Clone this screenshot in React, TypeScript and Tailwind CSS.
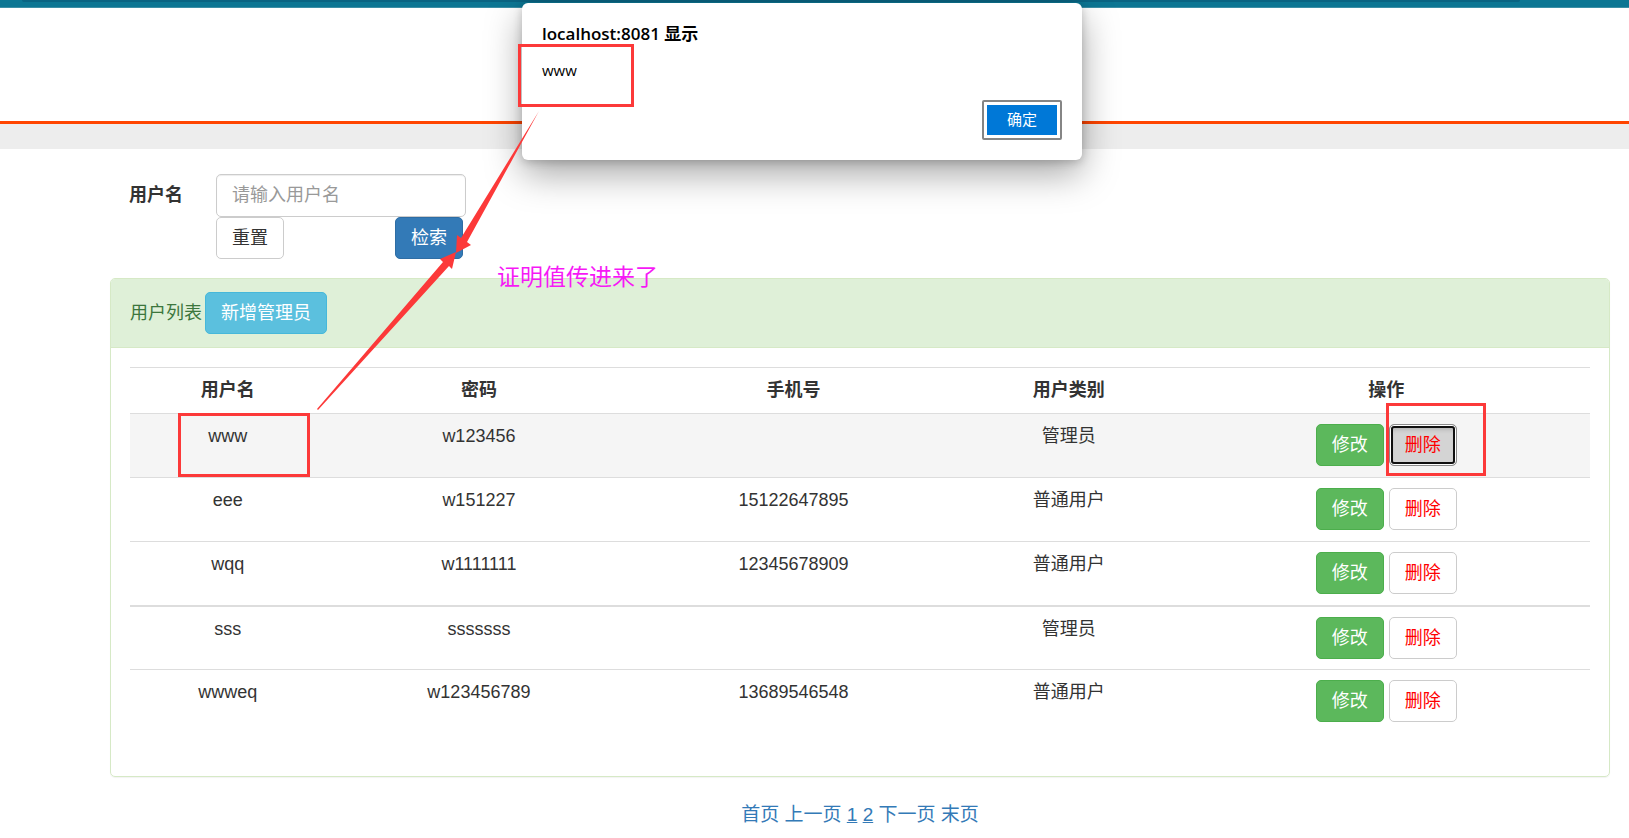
const users = [
    { name: "www", password: "w123456", phone: "", type: "管理员" },
    { name: "eee", password: "w151227", phone: "15122647895", type: "普通用户" },
    { name: "wqq", password: "w1111111", phone: "12345678909", type: "普通用户" },
    { name: "sss", password: "sssssss", phone: "", type: "管理员" },
    { name: "wwweq", password: "w123456789", phone: "13689546548", type: "普通用户" },
];

const btn = "h-[42px] rounded-[5px] border px-[15px] text-lg leading-6 whitespace-nowrap cursor-pointer";

function TopBar() {
    return (
        <header>
            <div className="h-2 bg-[#0c7693] border-b border-[#3c8fa5]">
                <div className="h-0.5 ml-[22px] mr-[109px] rounded-b-sm bg-[#0a6482]"></div>
            </div>
            <div className="h-[116px] border-b-3 border-[#ff4500]"></div>
            <div className="h-[25px] bg-[#ededed]"></div>
        </header>
    )
}

function SearchForm() {
    return (
        <form className="flex pl-[19px]" onSubmit={(e) => e.preventDefault()}>
            <label htmlFor="username" className="w-[87px] pt-[9px] font-bold">用户名</label>
            <div className="w-[250px]">
                <input
                    id="username"
                    type="text"
                    placeholder="请输入用户名"
                    className="block h-[43px] w-full rounded-[5px] border border-[#ccc] px-[15px] text-lg shadow-[inset_0_1px_1px_rgba(0,0,0,0.075)] placeholder:text-[#999] outline-none"
                />
                <div className="flex justify-between pr-[3px]">
                    <button type="reset" className={btn + " bg-white border-[#ccc]"}>重置</button>
                    <button type="submit" className={btn + " bg-[#337ab7] border-[#2e6da4] text-white"}>检索</button>
                </div>
            </div>
        </form>
    )
}

function UserTable() {
    return (
        <table className="w-full table-fixed mb-[23px] text-center">
            <thead>
                <tr className="h-[46px] border-t border-[#ddd]">
                    <th className="w-[13.4%]">用户名</th>
                    <th className="w-[21%]">密码</th>
                    <th className="w-[22.1%]">手机号</th>
                    <th className="w-[15.6%]">用户类别</th>
                    <th>操作</th>
                </tr>
            </thead>
            <tbody>
                {users.map((user, i) => (
                    <tr
                        key={user.name}
                        className={"h-16 align-top border-[#ddd] " + (i === 3 ? "border-t-2 " : "border-t ") + (i === 0 ? "bg-[#f5f5f5]" : "")}
                    >
                        <td className="pt-[10px]">{user.name}</td>
                        <td className="pt-[10px]">{user.password}</td>
                        <td className="pt-[10px]">{user.phone}</td>
                        <td className="pt-[10px]">{user.type}</td>
                        <td className="pt-[10px]">
                            <div className="flex justify-center gap-[5px]">
                                <button className={btn + " bg-[#5cb85c] border-[#4cae4c] text-white"}>修改</button>
                                {i === 0 ? (
                                    <button className={btn + " bg-[#d4d4d4] border-[#8c8c8c] text-[#f00] shadow-[inset_0_0_0_1px_#fff,inset_0_0_0_3px_#101010,inset_0_4px_5px_rgba(0,0,0,0.2)]"}>删除</button>
                                ) : (
                                    <button className={btn + " bg-white border-[#ccc] text-[#f00]"}>删除</button>
                                )}
                            </div>
                        </td>
                    </tr>
                ))}
            </tbody>
        </table>
    )
}

function AlertDialog() {
    return (
        <div
            role="alertdialog"
            aria-labelledby="alert-title"
            className="absolute left-[522px] top-[3px] flex h-[157px] w-[560px] flex-col rounded-md bg-white px-5 pt-[19px] pb-5 text-black font-['Open_Sans','Noto_Sans_CJK_SC',sans-serif] shadow-[0_14px_36px_rgba(0,0,0,0.35),0_2px_10px_rgba(0,0,0,0.2)]"
        >
            <h2 id="alert-title" className="text-[17px] leading-6 font-semibold">localhost:8081 显示</h2>
            <p className="mt-3 text-[15px] leading-6">www</p>
            <button className="mt-auto self-end h-10 w-20 rounded-xs border-2 border-[#858585] bg-white p-[3px] text-[15px] text-white">
                <span className="flex h-full items-center justify-center bg-[#0078d7] pb-0.5">确定</span>
            </button>
        </div>
    )
}

function Annotations() {
    return (
        <div className="pointer-events-none absolute inset-0">
            <div className="absolute left-[518px] top-[44px] h-[63px] w-[116px] border-3 border-[#fc3939]"></div>
            <div className="absolute left-[178px] top-[413px] h-16 w-[132px] border-3 border-[#fc3939]"></div>
            <div className="absolute left-[1386px] top-[403px] h-[73px] w-[100px] border-3 border-[#fc3939]"></div>
            <svg className="absolute left-0 top-0" width="700" height="450" viewBox="0 0 700 450" fill="#fc3939">
                <path d="M317 409 L443 262 L440 259 L456 252 L452 269 L449 266 L318 410 Z" />
                <path d="M539 111 L461 238 L457 235 L456 253 L471 245 L467 242 Z" />
            </svg>
            <p className="absolute left-[497px] top-[261px] text-[23px] leading-8 text-[#f619f6]">证明值传进来了</p>
        </div>
    )
}

export default function App() {
    return (
        <div className="relative bg-white pb-3 text-lg leading-[25px] text-[#333] font-['Liberation_Sans','Noto_Sans_CJK_SC',sans-serif]">
            <TopBar />
            <main className="pt-[25px] pl-[110px] pr-[19px]">
                <SearchForm />
                <section className="mt-[19px] rounded-[5px] border border-[#d6e9c6] shadow-[0_1px_1px_rgba(0,0,0,0.05)]">
                    <div className="flex items-center gap-[3px] rounded-t-[4px] border-b border-[#d6e9c6] bg-[#dff0d8] px-[19px] py-[13px] text-[#3c763d]">
                        <span>用户列表</span>
                        <button className={btn + " bg-[#5bc0de] border-[#46b8da] text-white"}>新增管理员</button>
                    </div>
                    <div className="p-[19px]">
                        <UserTable />
                    </div>
                </section>
                <nav className="mt-6 text-center text-[19px] leading-7 text-[#337ab7]">
                    <a href="#first">首页</a> <a href="#prev">上一页</a> <a href="#1" className="underline">1</a> <a href="#2" className="underline">2</a> <a href="#next">下一页</a> <a href="#last">末页</a>
                </nav>
            </main>
            <AlertDialog />
            <Annotations />
        </div>
    )
}
